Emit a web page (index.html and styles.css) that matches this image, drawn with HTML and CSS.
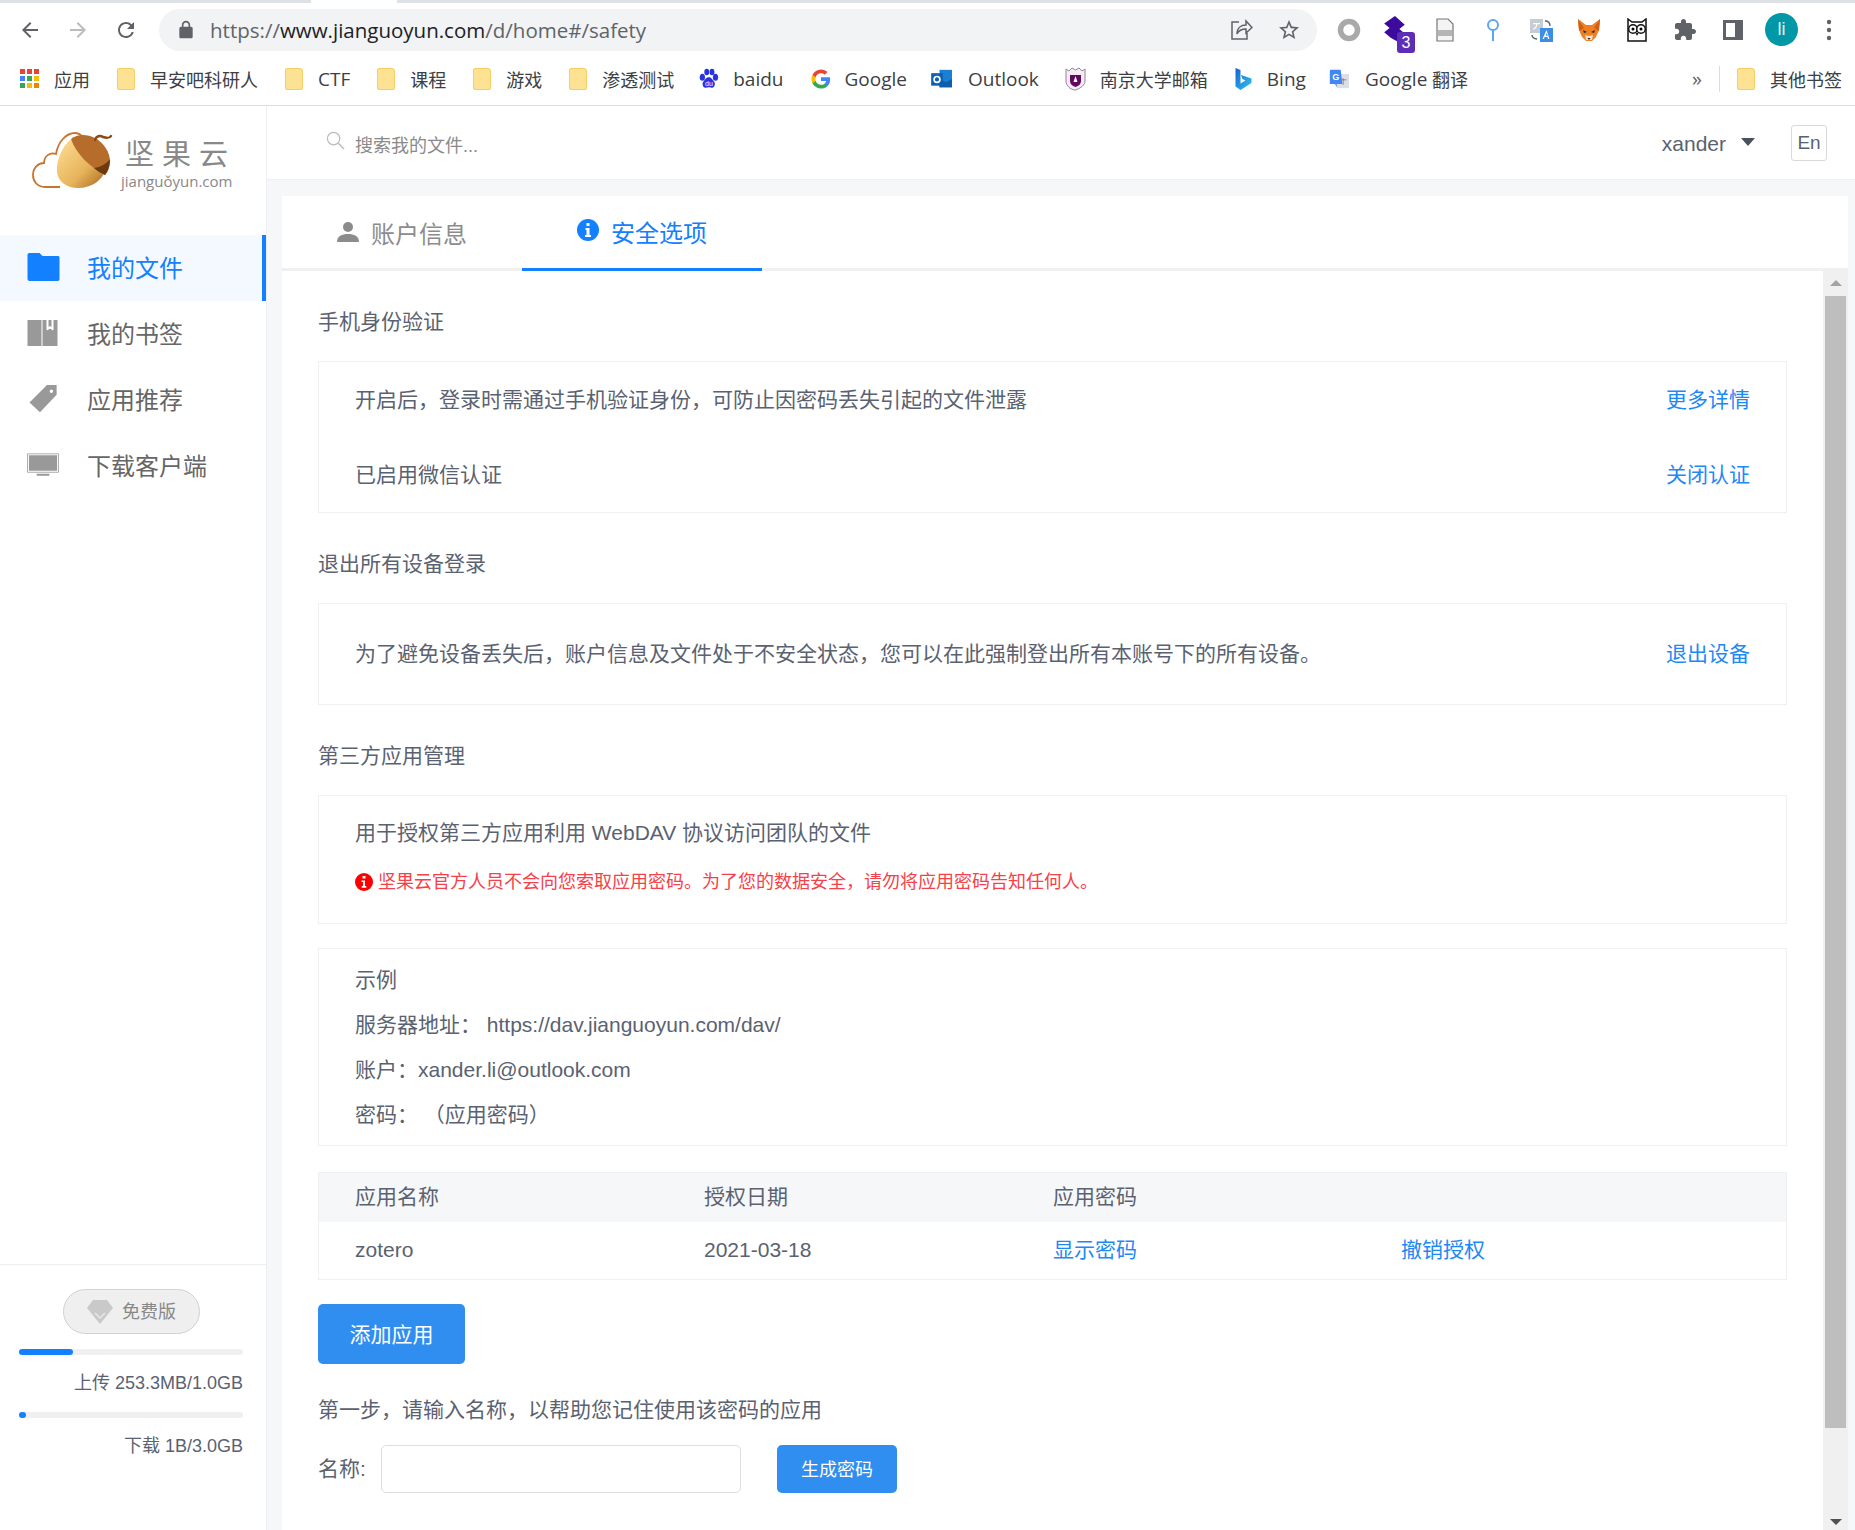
FILE: index.html
```html
<!doctype html>
<html lang="zh-CN">
<head>
	<meta charset="UTF-8">
	<title>坚果云 - 安全选项</title>
	<link rel="stylesheet" href="styles.css">
</head>
<body>
	<div class="tabstrip"><span class="tabstrip-gap"></span></div>
	<div class="toolbar">
		<svg class="tool-btn" viewBox="0 0 24 24"><path fill="#5f6368" d="M20 11H7.830l5.590-5.590L12 4l-8 8 8 8 1.410-1.410L7.830 13H20v-2z"/></svg>
		<svg class="tool-btn" viewBox="0 0 24 24"><path fill="#b9bcc0" d="M4 11h12.170l-5.590-5.590L12 4l8 8-8 8-1.410-1.410L16.170 13H4v-2z"/></svg>
		<svg class="tool-btn" viewBox="0 0 24 24"><path fill="#5f6368" d="M17.650 6.350A7.958 7.958 0 0012 4c-4.420 0-7.990 3.580-7.990 8s3.570 8 7.990 8c3.730 0 6.840-2.550 7.730-6h-2.080A5.990 5.990 0 0112 18c-3.310 0-6-2.690-6-6s2.690-6 6-6c1.660 0 3.140.69 4.220 1.780L13 11h7V4l-2.350 2.350z"/></svg>
		<div class="urlbar">
			<svg class="lock" viewBox="0 0 24 24"><path fill="#5f6368" d="M18 8h-1V6c0-2.760-2.240-5-5-5S7 3.240 7 6v2H6c-1.100 0-2 .9-2 2v10c0 1.100.9 2 2 2h12c1.100 0 2-.9 2-2V10c0-1.100-.9-2-2-2zM9 6c0-1.660 1.340-3 3-3s3 1.340 3 3v2H9V6z"/></svg>
			<span class="url">https://<b>www.jianguoyun.com</b>/d/home#/safety</span>
			<svg class="url-icon share" viewBox="0 0 24 24"><path fill="none" stroke="#5f6368" stroke-width="1.500" d="M10 4H3v17h15v-6M8 16c0-6 4-9 9-9V3l6 6.500L17 15v-4c-4 0-7 1-9 5z"/></svg>
			<svg class="url-icon star" viewBox="0 0 24 24"><path fill="#5f6368" d="M22 9.240l-7.190-.62L12 2 9.190 8.630 2 9.240l5.460 4.730L5.820 21 12 17.270 18.180 21l-1.630-7.030L22 9.240zM12 15.400l-3.760 2.270 1-4.280-3.320-2.880 4.380-.38L12 6.100l1.710 4.040 4.380.38-3.320 2.880 1 4.280L12 15.400z"/></svg>
		</div>
		<div class="exts">
			<svg class="tool-btn" viewBox="0 0 24 24"><circle cx="12" cy="12" r="8.500" fill="none" stroke="#a9a9a9" stroke-width="5.500"/></svg>
			<div class="tool-btn ext-badge">
				<svg viewBox="0 0 24 24" class="ext-gem"><path fill="#3d0a9e" d="M12 0l9 8-5 4 6 5-7 7-7-4-6-5 5-4-5-4z"/></svg>
				<span class="badge">3</span>
			</div>
			<svg class="tool-btn" viewBox="0 0 24 24"><path fill="#f4f4f4" stroke="#777" stroke-width="1.200" d="M4 1h11l5 5v17H4z"/><path fill="#b5b5b5" d="M5 12h14v6H5z"/></svg>
			<svg class="tool-btn" viewBox="0 0 24 24"><circle cx="12" cy="7" r="5" fill="none" stroke="#5ea5f0" stroke-width="2"/><path stroke="#5ea5f0" stroke-width="2" d="M12 12v11"/></svg>
			<svg class="tool-btn" viewBox="0 0 24 24"><path fill="#c5ccd3" d="M1 1h13v14H1z"/><path fill="#3a8ee6" d="M11 10h13v14H11z"/><path fill="none" stroke="#566" stroke-width="1.400" d="M16 3c3 0 5 2 5 5M8 21c-3 0-5-2-5-4"/><path fill="#fff" d="M17.500 12l3 9h-1.500l-.6-2h-2.800l-.6 2h-1.500zM16.900 17.700h1.800l-.9-3z"/><path fill="#fff" d="M4 5h7v1.200H8.300c0 2-1.300 4.500-4 5.500l-.4-1c1.800-.8 3-2 3.200-4.500H4z"/></svg>
			<svg class="tool-btn" viewBox="0 0 24 24"><path fill="#ee7f22" d="M1 1l8 6h6l8-6-1 11-3 7-4 4H9l-4-4-3-7z"/><path fill="#cf5f12" d="M1 1l6 9-5 3zM23 1l-6 9 5 3z"/><path fill="#f6dcc0" d="M8 17l4 1 4-1-1 5H9z"/><path fill="#2a2a2a" d="M6 12l4 2-3 1zM18 12l-4 2 3 1zM10.500 20h3l-1.500 2z"/></svg>
			<svg class="tool-btn" viewBox="0 0 24 24"><path fill="#fff" stroke="#111" stroke-width="1.500" d="M3 1l4 3h10l4-3v22H3z"/><circle cx="8" cy="11" r="4.300" fill="#fff" stroke="#111" stroke-width="1.500"/><circle cx="16" cy="11" r="4.300" fill="#fff" stroke="#111" stroke-width="1.500"/><circle cx="8" cy="11" r="1.500"/><circle cx="16" cy="11" r="1.500"/><path fill="#111" d="M10.500 15h3L12 18z"/></svg>
			<svg class="tool-btn" viewBox="0 0 24 24"><path fill="#5f6368" d="M20.500 11H19V7c0-1.100-.9-2-2-2h-4V3.500C13 2.120 11.880 1 10.500 1S8 2.120 8 3.500V5H4c-1.100 0-1.990.9-1.990 2v3.800H3.500c1.490 0 2.700 1.210 2.700 2.700s-1.210 2.700-2.700 2.700H2V20c0 1.100.9 2 2 2h3.800v-1.500c0-1.490 1.210-2.700 2.700-2.700 1.490 0 2.700 1.210 2.700 2.700V22H17c1.100 0 2-.9 2-2v-4h1.500c1.380 0 2.500-1.120 2.500-2.500S21.880 11 20.500 11z"/></svg>
			<svg class="tool-btn" viewBox="0 0 24 24"><path fill="#5f6368" fill-rule="evenodd" d="M2 2h20v20H2zM5 5v14h9V5z"/></svg>
			<div class="tool-btn"><span class="avatar">li</span></div>
			<svg class="tool-btn" viewBox="0 0 24 24"><circle cx="12" cy="4" r="2.200" fill="#5f6368"/><circle cx="12" cy="12" r="2.200" fill="#5f6368"/><circle cx="12" cy="20" r="2.200" fill="#5f6368"/></svg>
		</div>
	</div>
	<div class="bookmarks">
		<div class="bm">
			<svg class="bm-icon" viewBox="0 0 20 20"><path fill="#ea4335" d="M0 0h5v5H0zM7 0h5v5H7zM14 0h5v5h-5z"/><path fill="#4285f4" d="M0 7h5v5H0z"/><path fill="#34a853" d="M7 7h5v5H7z"/><path fill="#fbbc04" d="M14 7h5v5h-5z"/><path fill="#34a853" d="M0 14h5v5H0z"/><path fill="#fbbc04" d="M7 14h5v5H7z"/><path fill="#ea8600" d="M14 14h5v5h-5z"/></svg>
			应用
		</div>
		<div class="bm"><span class="folder"></span>早安吧科研人</div>
		<div class="bm"><span class="folder"></span><span class="lat">CTF</span></div>
		<div class="bm"><span class="folder"></span>课程</div>
		<div class="bm"><span class="folder"></span>游戏</div>
		<div class="bm bm-test"><span class="folder"></span>渗透测试</div>
		<div class="bm">
			<svg class="bm-icon bm-baidu" viewBox="0 0 24 24"><g fill="#2932e1"><ellipse cx="5" cy="10" rx="3" ry="4"/><ellipse cx="10" cy="4" rx="2.800" ry="3.800"/><ellipse cx="16" cy="4" rx="2.800" ry="3.800"/><ellipse cx="20" cy="10" rx="3" ry="4"/><path d="M12.500 10c3 0 4 3 6 5 2 3 0 7-3 7-1.500 0-2-.5-3-.5s-2 .5-3.500.5c-3 0-5-4-3-7 2-2 3-5 6.500-5z"/></g><text x="8" y="20" font-size="8" fill="#fff" font-family="Liberation Sans">du</text></svg>
			<span class="lat">baidu</span>
		</div>
		<div class="bm bm-google">
			<svg class="bm-icon" viewBox="0 0 24 24"><path fill="#4285f4" d="M23 12.300c0-.8-.1-1.600-.2-2.300H12v4.500h6.200c-.3 1.400-1.100 2.600-2.300 3.400v2.800h3.700c2.200-2 3.400-5 3.400-8.400z"/><path fill="#34a853" d="M12 23.500c3.100 0 5.700-1 7.600-2.800l-3.700-2.800c-1 .7-2.300 1.100-3.900 1.100-3 0-5.500-2-6.400-4.700H1.800v2.900c1.900 3.800 5.800 6.300 10.200 6.300z"/><path fill="#fbbc05" d="M5.600 14.300c-.5-1.400-.5-3 0-4.500V6.900H1.800c-1.600 3.200-1.600 7 0 10.300z"/><path fill="#ea4335" d="M12 5.100c1.700 0 3.200.6 4.400 1.700l3.300-3.300C17.700 1.600 15.100.5 12 .5 7.600.5 3.700 3 1.800 6.900l3.800 2.900c.9-2.700 3.400-4.700 6.400-4.700z"/></svg>
			<span class="lat">Google</span>
		</div>
		<div class="bm bm-outlook">
			<svg class="bm-icon bm-wide" viewBox="0 0 26 24"><path fill="#1b7fd4" d="M10 1h15v21H10z"/><path fill="#0f5ea8" d="M10 12l8 4 7-4v10H10z"/><path fill="#0d60b0" d="M0 5h14v15H0z"/><circle cx="7" cy="12.500" r="3.500" fill="none" stroke="#fff" stroke-width="2"/></svg>
			<span class="lat">Outlook</span>
		</div>
		<div class="bm">
			<svg class="bm-icon bm-nju" viewBox="0 0 21 24"><path fill="#f4eef4" stroke="#9b7f9c" d="M1 2l3 2 3-3 3.500 2L14 1l3 3 3-2v12c0 4-4 7-9.500 9C5 23 1 18 1 14z"/><path fill="#63065f" d="M5 8h11v6c0 3-2 5-5.500 6C7 19 5 17 5 14z"/><path fill="#fff" d="M10.500 9l2 6h-4z"/></svg>
			南京大学邮箱
		</div>
		<div class="bm bm-binglink">
			<svg class="bm-icon bm-bing" viewBox="0 0 16 22">
				<defs><linearGradient id="bing" x1="0" y1="0" x2="1" y2="1"><stop offset="0" stop-color="#1560d8"/><stop offset="1" stop-color="#2fc8ea"/></linearGradient></defs>
				<path fill="url(#bing)" d="M0 0l5 2v13.500l5-3-3-1.500-1.500-4L16 10.500V15L5 22l-5-3.500z"/>
			</svg>
			<span class="lat">Bing</span>
		</div>
		<div class="bm">
			<svg class="bm-icon bm-wide" viewBox="0 0 24 24"><path fill="#dcdfe3" d="M9 6h15v17H9z"/><path fill="#4285f4" d="M2 1h12l2 17-7 0 1 4-3-4H2a1 1 0 01-1-1V2a1 1 0 011-1z"/><text x="4" y="13" font-size="11" fill="#fff" font-family="Liberation Sans" font-weight="700">G</text><path stroke="#777" d="M17 11v8M14 13h7"/></svg>
			<span class="lat">Google</span>&nbsp;翻译
		</div>
		<div class="bm-right">
			<span class="bm-more">»</span>
			<span class="bm-sep"></span>
			<div class="bm"><span class="folder"></span>其他书签</div>
		</div>
	</div>

	<div class="app">
		<div class="sidebar">
			<div class="logo">
				<svg class="logo-mark" viewBox="0 0 82 58">
					<defs>
						<linearGradient id="nut" x1="0" y1="0" x2="1" y2="1"><stop offset="0" stop-color="#ffdf94"/><stop offset=".6" stop-color="#e7b45c"/><stop offset="1" stop-color="#a9651f"/></linearGradient>
					</defs>
					<path fill="#fff" stroke="#c8742c" stroke-width="1.800" d="M28 55H13C5 55 1 49 1 43c0-7 5-12 11-12 0-7 6-11 12-9 2-12 10-21 19-21 4 0 6 2 8 4"/>
					<path fill="url(#nut)" d="M39 7C30 15 24 28 25 40c1 10 10 16 21 16 14 0 24-8 27-17z"/>
					<path fill="#b66d2c" d="M39 7c6-5 16-5 24-1 9 5 15 14 15 24 0 5-2 10-5 13C58 35 44 22 39 7z"/>
					<path fill="#6d3a10" d="M78 27c0 6-2 12-5 16-4-2-8-4-11-7 7-1 12-4 16-9z"/>
					<path fill="none" stroke="#8a4a17" stroke-width="2.500" stroke-linecap="round" d="M63 8c1-4 5-5 8-3 3 1 7 1 8-1"/>
				</svg>
				<div class="logo-text">
					<div class="logo-cn">坚 果 云</div>
					<div class="logo-en">jianguǒyun.com</div>
				</div>
			</div>
			<ul class="nav">
				<li class="on">
					<svg class="nav-icon" viewBox="0 0 32 28"><path fill="#1380ff" d="M0 2c0-1 .5-2 2-2h10l3 3h15c1.500 0 2 .5 2 2v21c0 1-.5 2-2 2H2c-1 0-2-1-2-2z"/></svg>
					我的文件
				</li>
				<li>
					<svg class="nav-icon" viewBox="0 0 32 28"><path fill="#999" d="M0 1h14v26H0zM15 1h15v26H15z"/><path fill="#fff" stroke="#fff" d="M19.500 1h6v10l-3-2-3 2z"/><path fill="#999" d="M21 1h3v7l-1.500-1-1.500 1z"/></svg>
					我的书签
				</li>
				<li>
					<svg class="nav-icon" viewBox="0 0 32 32"><path fill="#999" fill-rule="evenodd" d="M20 0h11v11L12 31 0 20zM25 5a2 2 0 100 4 2 2 0 000-4z"/></svg>
					应用推荐
				</li>
				<li>
					<svg class="nav-icon" viewBox="0 0 34 24"><path fill="#fff" stroke="#aaa" d="M.5.500h32v19H.5z"/><path fill="#999" d="M2 2h29v16H2zM10 21h13v2H10z"/></svg>
					下载客户端
				</li>
			</ul>
			<div class="side-foot">
				<div class="plan">
					<svg class="plan-gem" viewBox="0 0 26 24"><path fill="#c9c9c9" d="M6 0h14l6 8-13 16L0 8z"/><path fill="none" stroke="#e8e8e8" stroke-width="1.500" d="M8 13l5 5 5-5"/></svg>
					<span class="plan-name">免费版</span>
				</div>
				<div class="bar"><div class="bar-fill" style="width:54px"></div></div>
				<div class="usage">上传 253.3MB/1.0GB</div>
				<div class="bar"><div class="bar-fill" style="width:7px"></div></div>
				<div class="usage">下载 1B/3.0GB</div>
			</div>
		</div>

		<div class="main">
			<div class="topbar">
				<svg class="search-icon" viewBox="0 0 20 20"><circle cx="8" cy="8" r="6.500" fill="none" stroke="#bbb" stroke-width="1.300"/><path stroke="#bbb" stroke-width="1.500" d="M13 13l6 6"/></svg>
				<span class="search-text">搜索我的文件...</span>
				<span class="user">xander</span>
				<span class="caret"></span>
				<span class="lang">En</span>
			</div>
			<div class="content">
				<div class="panel">
					<div class="tabs">
						<div class="tab">
							<svg class="tab-icon" viewBox="0 0 22 22"><circle cx="11" cy="6" r="5" fill="#8c8c8c"/><path fill="#8c8c8c" d="M0 21c0-6 5-8 11-8s11 2 11 8z"/></svg>
							账户信息
						</div>
						<div class="tab on">
							<svg class="tab-icon" viewBox="0 0 22 22"><circle cx="11" cy="11" r="11" fill="#1380ff"/><path fill="#fff" d="M9.500 4h3v3h-3zM8.500 9h4v7h1.500v2H8v-2h1.500v-5h-1z"/></svg>
							安全选项
						</div>
					</div>
					<div class="panel-body">
						<div class="scroll">
							<div class="sec-title first">手机身份验证</div>
							<div class="box box-rows">
								<div class="row"><span>开启后，登录时需通过手机验证身份，可防止因密码丢失引起的文件泄露</span><a>更多详情</a></div>
								<div class="row"><span>已启用微信认证</span><a>关闭认证</a></div>
							</div>
							<div class="sec-title">退出所有设备登录</div>
							<div class="box box-single">
								<div class="row"><span>为了避免设备丢失后，账户信息及文件处于不安全状态，您可以在此强制登出所有本账号下的所有设备。</span><a>退出设备</a></div>
							</div>
							<div class="sec-title">第三方应用管理</div>
							<div class="box box-warn">
								<div class="line">用于授权第三方应用利用 WebDAV 协议访问团队的文件</div>
								<div class="warn">
									<svg class="warn-icon" viewBox="0 0 18 18"><circle cx="9" cy="9" r="9" fill="#f00"/><path fill="#fff" d="M7.500 3h3v2.500h-3zM6.500 7.500h3.500V13h1.300v1.700H6.700V13H8V9H6.500z"/></svg>
									坚果云官方人员不会向您索取应用密码。为了您的数据安全，请勿将应用密码告知任何人。
								</div>
							</div>
							<div class="box box-example">
								<div class="line">示例</div>
								<div class="line">服务器地址： https://dav.jianguoyun.com/dav/</div>
								<div class="line">账户：xander.li@outlook.com</div>
								<div class="line">密码： （应用密码）</div>
							</div>
							<div class="table">
								<div class="tr th"><span>应用名称</span><span>授权日期</span><span>应用密码</span><span></span></div>
								<div class="tr"><span>zotero</span><span>2021-03-18</span><a>显示密码</a><a>撤销授权</a></div>
							</div>
							<button class="btn btn-add">添加应用</button>
							<div class="step">第一步，请输入名称，以帮助您记住使用该密码的应用</div>
							<div class="name-row">
								<label>名称:</label>
								<input class="name-input" type="text">
								<button class="btn btn-gen">生成密码</button>
							</div>
						</div>
						<div class="scrollbar">
							<span class="arrow arrow-up"></span>
							<div class="thumb"></div>
							<span class="arrow arrow-down"></span>
						</div>
					</div>
				</div>
			</div>
		</div>
	</div>
</body>
</html>
```

FILE: styles.css
```css
*{margin:0;padding:0;box-sizing:border-box;}
html,body{height:1530px;overflow:hidden;}
body{
	background:#fff;
	font-family:"Liberation Sans","Noto Sans CJK SC",sans-serif;
	color:#5a6271;
}
ul{list-style:none;}

/* browser chrome */
.tabstrip{height:3px;background:#dee1e6;position:relative;}
.tabstrip-gap{display:block;width:86px;height:3px;margin-left:311px;background:#fff;}
.toolbar{
	height:61px;
	display:flex;
	align-items:flex-start;
	padding:6px 0 0 6px;
}
.tool-btn{
	width:48px;
	height:42px;
	padding:9px 12px;
	flex:none;
	display:block;
}
.urlbar{
	width:1158px;
	height:42px;
	margin:0 8px 0 9px;
	border-radius:21px;
	background:#f1f3f4;
	display:flex;
	align-items:center;
	padding-left:17px;
	font-family:"Open Sans","Noto Sans",sans-serif;
}
.lock{width:20px;height:20px;flex:none;}
.url{margin-left:14px;font-size:20.500px;color:#5f6368;flex:1;}
.url b{font-weight:400;color:#202124;}
.url-icon{width:24px;height:24px;flex:none;}
.share{margin-right:24px;}
.star{margin-right:16px;}
.exts{display:flex;}
.ext-badge{position:relative;padding:0;}
.ext-gem{display:block;width:26px;height:26px;margin:7px 0 0 9px;}
.badge{
	position:absolute;
	left:24px;
	top:23px;
	width:18px;
	height:21px;
	border-radius:3px;
	background:#5f2db5;
	color:#fff;
	font-size:16px;
	line-height:21px;
	text-align:center;
}
.avatar{
	display:block;
	width:33px;
	height:33px;
	margin:-5px 0 0 -4px;
	border-radius:50%;
	background:#0097a7;
	color:#e6f6f7;
	font-size:18px;
	line-height:33px;
	text-align:center;
}

.bookmarks{
	height:42px;
	border-bottom:1px solid #dadce0;
	display:flex;
	align-items:center;
	padding:0 0 12px 20px;
	font-family:"Open Sans","Noto Sans","Noto Sans CJK SC",sans-serif;
	font-size:18px;
	color:#3c4043;
}
.bm{display:flex;align-items:center;margin-right:27px;white-space:nowrap;flex:none;}
.bm-test{margin-right:24px;}
.bm-google{margin-right:23px;}
.bm-outlook{margin-right:26px;}
.bm-binglink{margin-right:21px;}
.lat{font-size:19px;}
.bm-icon{width:20px;height:20px;margin-right:14px;flex:none;}
.bm-wide{width:24px;}
.bm-baidu{width:21px;height:22px;}
.bm-nju{width:21px;height:24px;}
.bm-bing{width:17px;height:22px;margin-right:15px;}
.folder{
	width:18px;
	height:22px;
	margin-right:15px;
	flex:none;
	background:#fde293;
	border:1px solid #f4cf67;
	border-radius:2px 3px 2px 2px;
}
.bm-right{margin-left:auto;display:flex;align-items:center;}
.bm-right .bm{margin-right:13px;}
.bm-more{font-size:20px;color:#5f6368;}
.bm-sep{width:1px;height:26px;background:#dadce0;margin:0 17px;}

/* page */
.app{display:flex;height:1424px;}
.sidebar{
	width:267px;
	flex:none;
	border-right:1px solid #eceef1;
	display:flex;
	flex-direction:column;
}
.logo{
	height:129px;
	display:flex;
	align-items:flex-start;
	padding:26px 0 0 32px;
}
.logo-mark{width:82px;height:58px;flex:none;}
.logo-text{margin-left:7px;color:#888;}
.logo-cn{font-size:29px;line-height:36px;margin-top:5px;padding-left:4px;white-space:pre;}
.logo-en{font-size:15px;line-height:18px;margin-top:-1px;font-family:"Open Sans",sans-serif;}
.nav li{
	height:66px;
	display:flex;
	align-items:center;
	padding:0 0 3px 27px;
	font-size:24px;
	color:#666;
}
.nav li.on{
	background:#f4f9ff;
	border-right:4px solid #1380ff;
	color:#1380ff;
}
.nav-icon{width:33px;height:28px;margin-right:27px;flex:none;}
.side-foot{
	margin-top:auto;
	height:266px;
	border-top:1px solid #eceef1;
	padding:24px 23px 0 19px;
}
.plan{
	width:137px;
	height:45px;
	margin-left:44px;
	display:flex;
	align-items:center;
	justify-content:center;
	border:1px solid #d2d2d2;
	border-radius:23px;
	background:#efefef;
	color:#888;
	font-size:18px;
}
.plan-name{margin-top:-3px;}
.plan-gem{width:26px;height:24px;margin-right:9px;}
.bar{height:6px;border-radius:3px;background:#f0f0f0;margin-top:15px;}
.bar-fill{height:6px;border-radius:3px;background:#1380ff;}
.usage{
	text-align:right;
	font-size:18px;
	line-height:24px;
	margin:16px 0 17px;
}
.usage + .bar{margin-top:0;}

.main{flex:1;display:flex;flex-direction:column;min-width:0;}
.topbar{
	height:74px;
	flex:none;
	border-bottom:1px solid #edeff2;
	display:flex;
	align-items:center;
	padding:2px 28px 0 59px;
}
.search-icon{width:19px;height:19px;flex:none;margin-top:-6px;}
.search-text{margin-left:10px;font-size:18px;color:#8a8a8a;flex:1;}
.user{font-size:21px;color:#5a6271;}
.caret{
	width:0;
	height:0;
	margin:-4px 36px 0 15px;
	border-left:7px solid transparent;
	border-right:7px solid transparent;
	border-top:8px solid #4a5060;
}
.lang{
	width:36px;
	height:36px;
	margin-top:-2px;
	border:1px solid #d9d9d9;
	border-radius:3px;
	font-size:19px;
	line-height:34px;
	text-align:center;
}
.content{flex:1;background:#f6f7f9;padding:16px 7px 0 15px;min-height:0;}
.panel{height:100%;background:#fff;display:flex;flex-direction:column;}
.tabs{
	height:75px;
	flex:none;
	display:flex;
	border-bottom:3px solid #f0f0f0;
}
.tab{
	width:240px;
	height:75px;
	display:flex;
	align-items:center;
	justify-content:center;
	padding-bottom:2px;
	font-size:24px;
	color:#8c8c8c;
}
.tab.on{color:#1380ff;border-bottom:3px solid #1380ff;}
.tab-icon{width:22px;height:22px;margin-right:12px;margin-top:-2px;flex:none;}
.panel-body{flex:1;display:flex;min-height:0;}
.scroll{flex:1;padding:0 36px;min-width:0;font-size:21px;line-height:30px;}
.sec-title{margin:36px 0 24px;}
.box{border:1px solid #f0f0f0;padding:0 36px;}
.row{display:flex;justify-content:space-between;}
a{color:#1e88f5;}
.box-rows{padding-top:23px;padding-bottom:22px;}
.box-rows .row + .row{margin-top:45px;}
.box-single{padding-top:35px;padding-bottom:35px;}
.box-warn{height:129px;padding-top:22px;}
.warn{
	display:flex;
	align-items:center;
	margin-top:19px;
	font-size:18px;
	color:#f5424a;
}
.warn-icon{width:18px;height:18px;margin-right:5px;flex:none;}
.box-example{height:198px;margin-top:24px;padding-top:16px;}
.box-example .line + .line{margin-top:15px;}
.table{margin-top:26px;border:1px solid #f0f0f0;}
.tr{
	display:grid;
	grid-template-columns:349px 349px 348px 1fr;
	height:57px;
	align-items:center;
	padding:0 0 2px 36px;
}
.th{height:49px;background:#f6f7f9;}
.btn{
	display:block;
	border:none;
	border-radius:5px;
	background:#2f8ef0;
	color:#fff;
	font-family:inherit;
	padding-bottom:3px;
}
.btn-add{width:147px;height:60px;margin-top:24px;font-size:21px;}
.step{margin-top:31px;}
.name-row{display:flex;align-items:center;margin-top:20px;}
.name-row label{width:63px;flex:none;}
.name-input{
	width:360px;
	height:48px;
	border:1px solid #dcdfe2;
	border-radius:5px;
	background:#fff;
}
.btn-gen{width:120px;height:48px;margin-left:36px;font-size:18px;}
.scrollbar{
	width:25px;
	flex:none;
	background:#f0f0f0;
	display:flex;
	flex-direction:column;
	align-items:center;
}
.arrow{width:0;height:0;border-left:6px solid transparent;border-right:6px solid transparent;flex:none;}
.arrow-up{margin:9px 0 10px;border-bottom:6px solid #a3a3a3;}
.arrow-down{margin:auto 0 5px;border-top:6px solid #505050;}
.thumb{width:21px;height:1132px;background:#bebebe;flex:none;}
```
